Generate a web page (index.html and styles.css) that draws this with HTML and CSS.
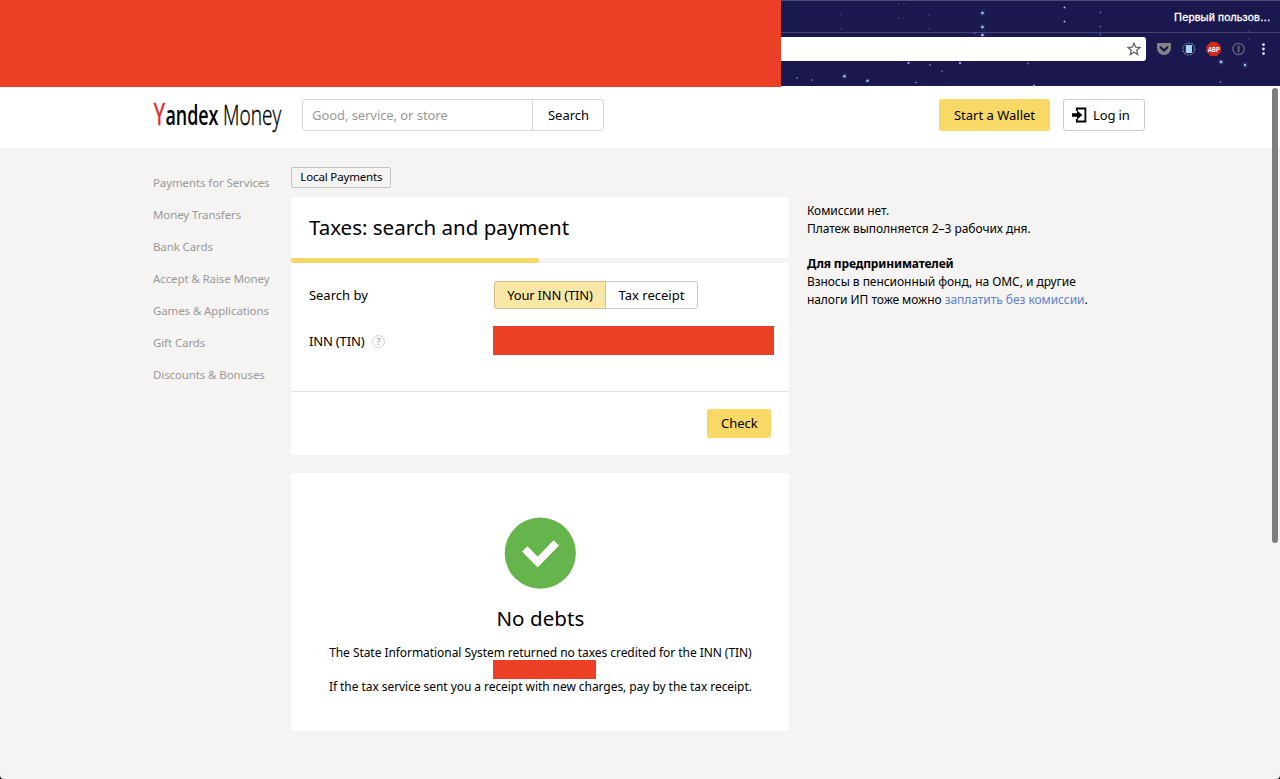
FILE: index.html
```html
<!DOCTYPE html>
<html lang="en">
<head>
<meta charset="utf-8">
<title>Yandex Money</title>
<link rel="stylesheet" href="styles.css">
</head>
<body>
<div class="window">
  <div class="chrome">
    <div class="redaction chrome-redaction"></div>
    <div class="chrome-sky">
      <svg class="stars" width="499" height="86" viewBox="0 0 499 86">
        <g fill="#6f8fd0" opacity=".15">
          <circle cx="201.500" cy="12" r="3"/><circle cx="201.500" cy="26" r="3"/><circle cx="201.500" cy="34" r="3"/><circle cx="63.500" cy="75" r="3"/><circle cx="440" cy="61" r="3"/><circle cx="464" cy="64" r="3"/><circle cx="86.500" cy="80" r="2.500"/>
        </g>
        <g fill="#aac4ee">
          <circle cx="201.500" cy="12" r="1.300"/><circle cx="201.500" cy="26" r="1.300"/><circle cx="201.500" cy="34" r="1.300"/><circle cx="63.500" cy="75.300" r="1.300"/><circle cx="440" cy="61" r="1.400"/><circle cx="464" cy="64" r="1.200"/><circle cx="86.500" cy="79.700" r="1.200"/><circle cx="283.500" cy="6.500" r="1"/><circle cx="283.500" cy="20.500" r="1"/><circle cx="127.500" cy="62" r="1.100"/><circle cx="179" cy="62" r="1.100"/><circle cx="253" cy="85" r="1.200"/>
        </g>
        <g fill="#5a6db0">
          <circle cx="16" cy="77" r="1"/><circle cx="31" cy="79" r=".9"/><circle cx="149" cy="64" r="1"/><circle cx="161" cy="70.500" r=".9"/><circle cx="135" cy="81.500" r="1"/><circle cx="247" cy="62.500" r="1"/><circle cx="319.500" cy="11.500" r=".9"/><circle cx="319.500" cy="25.500" r=".9"/><circle cx="319.500" cy="33.500" r=".9"/><circle cx="193.500" cy="32" r=".9"/><circle cx="439.500" cy="81" r=".9"/>
        </g>
        <g fill="#34387c">
          <circle cx="117" cy="3" r=".9"/><circle cx="123" cy="3" r=".9"/><circle cx="117" cy="17" r=".9"/><circle cx="123" cy="17" r=".9"/><circle cx="60" cy="13" r=".9"/><circle cx="60" cy="28" r=".9"/><circle cx="148" cy="14" r=".9"/><circle cx="148" cy="28" r=".9"/><circle cx="216" cy="17" r=".8"/><circle cx="171" cy="82.500" r=".9"/><circle cx="468" cy="30" r=".9"/><circle cx="468" cy="38" r=".9"/>
        </g>
      </svg>
      <div class="tabs"><span class="user">Первый пользов…</span></div>
      <div class="toolbar">
        <div class="address">
          <svg width="14" height="14" viewBox="0 0 14 14"><path d="M7 1.200 8.700 5.200 13 5.500 9.700 8.200 10.800 12.600 7 10.200 3.200 12.600 4.300 8.200 1 5.500 5.300 5.200Z" fill="none" stroke="#5c5c5c" stroke-width="1.200"/></svg>
        </div>
        <svg class="ext" width="125" height="16" viewBox="0 0 125 16">
          <path d="M1.700 2h12.600q.7 0 .7.700v4.300a7 7 0 0 1-14 0V2.700q0-.7.700-.7z" fill="#858585"/>
          <path d="m4.600 6.300 3.400 3.300 3.400-3.300" fill="none" stroke="#1a174d" stroke-width="2.200" stroke-linecap="round" stroke-linejoin="round"/>
          <circle cx="33" cy="8" r="6" fill="none" stroke="#5c8ca8" stroke-width="1.100" stroke-dasharray="2.200 .8"/>
          <rect x="30" y="4" width="6.200" height="8" rx=".8" fill="#a9d6ee"/>
          <path d="M55 1h6l4.200 4.200v5.600L61 15h-6l-4.200-4.200V5.200z" fill="#cf2a1c"/>
          <text x="52" y="11" class="abp" textLength="12.200" lengthAdjust="spacingAndGlyphs">ABP</text>
          <circle cx="83" cy="8" r="5.700" fill="none" stroke="#656078" stroke-width="1.400"/>
          <path d="M83 4.500v7" stroke="#656078" stroke-width="2"/>
          <circle cx="108" cy="3.600" r="1.400" fill="#e5e5f5"/><circle cx="108" cy="8" r="1.400" fill="#e5e5f5"/><circle cx="108" cy="12.600" r="1.400" fill="#e5e5f5"/>
        </svg>
      </div>
    </div>
  </div>

  <header class="header">
    <svg class="logo" width="138" height="52" viewBox="-4 -8 138 52">
      <g transform="scale(.68 1)">
        <text x="1" y="26" class="logo-y" textLength="16.500" lengthAdjust="spacingAndGlyphs">Y</text>
        <text x="18.300" y="26" class="logo-bold" textLength="78" lengthAdjust="spacingAndGlyphs">andex</text>
        <text x="103" y="26" class="logo-light" textLength="85.500" lengthAdjust="spacingAndGlyphs">Money</text>
      </g>
    </svg>
    <div class="search">
      <div class="search-input"><span class="t-placeholder">Good, service, or store</span></div>
      <div class="search-button"><span>Search</span></div>
    </div>
    <div class="account">
      <div class="button wallet"><span>Start a Wallet</span></div>
      <div class="button login">
        <svg width="16" height="16" viewBox="0 0 16 16"><path d="M4.800 4V1.500h8.600v13H4.800V12" fill="none" stroke="#000" stroke-width="1.800"/><path d="M0 6.200h5V3.500L10.500 8 5 12.500V9.800H0z"/></svg>
        <span class="t-login">Log in</span>
      </div>
    </div>
  </header>

  <main class="page">
    <nav class="side">
      <a>Payments for Services</a>
      <a>Money Transfers</a>
      <a>Bank Cards</a>
      <a>Accept &amp; Raise Money</a>
      <a>Games &amp; Applications</a>
      <a>Gift Cards</a>
      <a>Discounts &amp; Bonuses</a>
    </nav>
    <div class="content">
      <div class="crumb"><span>Local Payments</span></div>
      <section class="card form">
        <h1 class="title">Taxes: search and payment</h1>
        <div class="progress"><div class="progress-fill"></div></div>
        <div class="fields">
          <div class="row">
            <span class="label">Search by</span>
            <div class="toggle">
              <div class="option selected"><span class="t-your">Your INN (TIN)</span></div>
              <div class="option"><span>Tax receipt</span></div>
            </div>
          </div>
          <div class="row inn">
            <span class="label"><span class="t-inn">INN (TIN)</span><i class="help">?</i></span>
            <div class="redaction inn-value"></div>
          </div>
        </div>
        <div class="actions"><div class="check"><span>Check</span></div></div>
      </section>
      <section class="card result">
        <svg width="72" height="72" viewBox="0 0 72 72"><circle cx="36.300" cy="36.200" r="35.600" fill="#65b54c"/><path d="m20.800 31.800 12.800 13.300L52.300 25.800" fill="none" stroke="#fff" stroke-width="7.600"/></svg>
        <h2 class="result-title">No debts</h2>
        <p class="p1">The State Informational System returned no taxes credited for the INN (TIN)</p>
        <div class="redaction result-value"></div>
        <p class="p2">If the tax service sent you a receipt with new charges, pay by the tax receipt.</p>
      </section>
    </div>
    <aside class="info">
      <p>Комиссии нет.</p>
      <p>Платеж выполняется 2–3 рабочих дня.</p>
      <p class="info-title">Для предпринимателей</p>
      <p>Взносы в пенсионный фонд, на ОМС, и другие</p>
      <p>налоги ИП тоже можно <a>заплатить без комиссии</a>.</p>
    </aside>
  </main>
  <div class="scrollbar"></div>
</div>
</body>
</html>
```
FILE: styles.css
```css
* { box-sizing: border-box; }
body { margin: 0; background: #000; font-family: "Noto Sans", sans-serif; font-size: 13px; color: #000; }
h1, h2, p { margin: 0; font-weight: 400; }
span, a, p, h1, h2 { white-space: nowrap; }
.window { position: relative; width: 1280px; height: 779px; background: #f5f4f2; border-radius: 0 0 4px 4px; overflow: hidden; }
.redaction { background: #ec4026; }

.chrome { display: flex; height: 86px; }
.chrome-redaction { position: relative; z-index: 1; width: 781px; height: 87px; }
.chrome-sky { position: relative; width: 499px; background: #1b184f; border-top: 1px solid #4d4b78; }
.stars { position: absolute; left: 0; top: 0; }
.tabs { display: flex; justify-content: flex-end; align-items: center; height: 32px; padding-right: 9px; border-bottom: 1px solid #45436f; }
.user { font: 11px "Liberation Sans", sans-serif; letter-spacing: .13px; color: #fff; -webkit-text-stroke: .3px #fff; }
.toolbar { position: relative; display: flex; align-items: center; margin-top: 4px; height: 24px; }
.address { display: flex; align-items: center; justify-content: flex-end; width: 367px; height: 24px; padding-right: 5px; background: #fff; border-radius: 0 3px 3px 0; }
.ext { margin-left: 9.500px; }
.abp { font: bold 8px "Liberation Sans", sans-serif; fill: #fff; }

.header { display: flex; align-items: flex-start; height: 62px; padding: 13px 135px 0 153px; background: #fff; }
.logo { margin: -8px -4px -8px -4px; font-family: "Open Sans", sans-serif; }
.logo-y { font-size: 31px; font-weight: 400; fill: #e52620; stroke: #e52620; stroke-width: .6px; }
.logo-bold { font-size: 27px; font-weight: 600; }
.logo-light { font-size: 27px; font-weight: 300; stroke: #000; stroke-width: .4px; }
.search { display: flex; width: 302px; height: 32px; margin-left: 19px; border: 1px solid #d8d8d8; border-radius: 3px; background: #fff; }
.search-input { display: flex; align-items: center; width: 230px; padding-left: 9px; border-right: 1px solid #d8d8d8; color: #999; }
.t-placeholder { letter-spacing: -.07px; }
.search-button { display: flex; flex: 1; align-items: center; justify-content: center; padding-left: 1px; }
.account { display: flex; gap: 13px; margin-left: auto; }
.button { display: flex; align-items: center; height: 32px; border-radius: 3px; }
.wallet { justify-content: center; width: 111px; background: #f8d965; }
.login { gap: 5px; width: 82px; padding-left: 8px; border: 1px solid #ccc; }
.t-login { letter-spacing: -.15px; }

.page { display: flex; align-items: flex-start; }
.side { display: flex; flex-direction: column; width: 138px; margin: 19px 0 0 153px; color: #999; font-size: 11.500px; letter-spacing: -.11px; line-height: 32px; }
.content { width: 498px; margin: 19px 0 0 .4px; }
.crumb { display: flex; align-items: center; justify-content: center; width: 100px; height: 21px; padding-bottom: 2px; border: 1px solid #c3c3c1; border-radius: 2px; font-size: 11.500px; letter-spacing: -.15px; }
.card { background: #fff; }
.form { margin-top: 9px; height: 258.400px; }
.title { height: 61px; padding-left: 17.500px; font-size: 20.500px; line-height: 60px; }
.progress { height: 5px; background: #f4f3f1; }
.progress-fill { width: 248px; height: 5px; background: #f5d766; border-radius: 1px 3px 3px 1px; }
.fields { height: 128px; padding: 18px 0 0 17.500px; }
.row { display: flex; align-items: center; height: 28px; }
.label { display: flex; align-items: center; width: 185.100px; }
.toggle { display: flex; height: 28px; border: 1px solid #c8c8c8; border-radius: 3px; }
.option { display: flex; align-items: center; justify-content: center; width: 91px; }
.selected { width: 112px; margin: -1px 0 -1px -1px; background: #fbe7a5; border: 1px solid #cfc08c; border-radius: 3px 0 0 3px; }
.t-your { letter-spacing: -.2px; }
.inn { height: 30px; margin-top: 16px; }
.inn .label { padding-top: 2px; }
.t-inn { letter-spacing: -.15px; }
.inn-value { width: 281px; height: 29px; margin-left: -1px; }
.help { width: 13px; height: 13px; margin-left: 7.500px; border: 1px solid #d2d2d2; border-radius: 50%; color: #888; font-size: 9px; font-style: normal; line-height: 11px; text-align: center; }
.actions { display: flex; justify-content: flex-end; height: 64.400px; padding: 17.400px 18px 0 0; border-top: 1px solid #e6e6e6; }
.check { display: flex; align-items: center; justify-content: center; width: 64px; height: 29px; padding-bottom: 1px; background: #f8d965; border-radius: 3px; }
.result { display: flex; flex-direction: column; align-items: center; margin-top: 18px; height: 257.200px; padding-top: 44px; font-size: 12px; letter-spacing: -.06px; }
.result svg { flex: none; }
.result-title { margin-top: 13.500px; font-size: 20.500px; line-height: 30px; letter-spacing: .08px; }
.p1 { margin-top: 12.500px; line-height: 16px; }
.p2 { line-height: 16px; }
.result-value { width: 103px; height: 19px; margin: -1px 0 0 8px; }
.info { margin: 54px 0 0 17.500px; font-size: 12px; letter-spacing: -.05px; line-height: 17.800px; }
.info-title { margin-top: 17.800px; font-weight: 700; letter-spacing: -.15px; }
.info a { color: #5c82cc; }
.scrollbar { position: absolute; left: 1272px; top: 88px; width: 6px; height: 455px; border-radius: 3px; background: #7d7d7d; }
```
